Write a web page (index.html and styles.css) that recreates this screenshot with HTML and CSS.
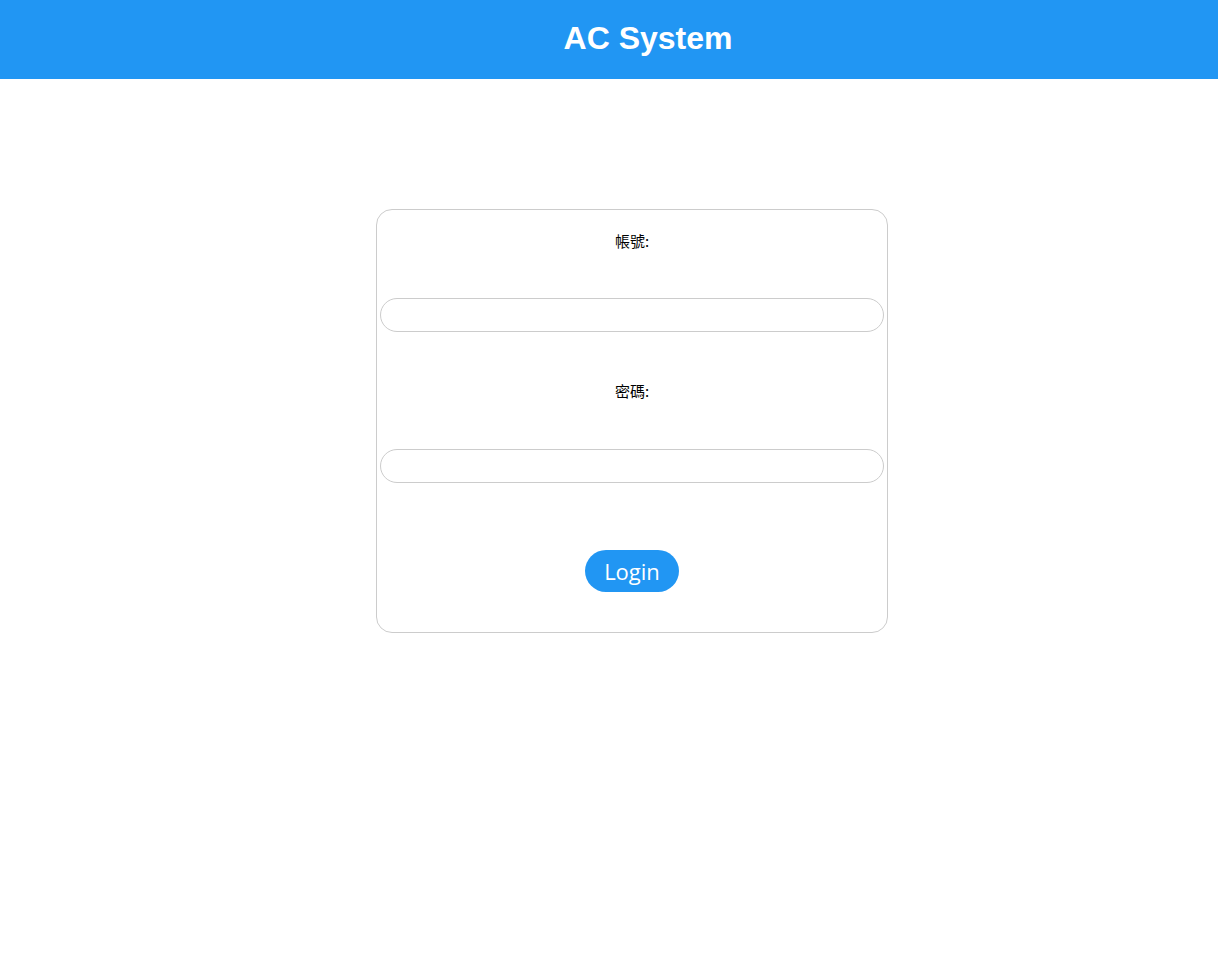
FILE: index.html
```html
<!DOCTYPE html>
<html lang="zh-Hant">
<head>
<meta charset="utf-8">
<title>AC System</title>
<link rel="stylesheet" href="styles.css">
</head>
<body>
<header class="topbar">
  <h1 class="title">AC System</h1>
</header>
<main class="main">
  <form class="card">
    <label class="label" for="acc">帳號:</label>
    <input class="field" id="acc" type="text">
    <label class="label label-second" for="pwd">密碼:</label>
    <input class="field field-second" id="pwd" type="password">
    <button class="login" type="button">Login</button>
  </form>
</main>
</body>
</html>
```
FILE: styles.css
```css
html, body {
  margin: 0;
  padding: 0;
  background: #ffffff;
}
body {
  font-family: "Liberation Sans", Arial, "Noto Sans CJK TC", sans-serif;
}
.topbar {
  height: 79px;
  background: #2196f3;
  display: flex;
  align-items: center;
  justify-content: center;
  padding-left: 78px;
  box-sizing: border-box;
}
.title {
  margin: 0;
  color: #ffffff;
  font-family: "Liberation Sans", Arial, sans-serif;
  font-weight: bold;
  font-size: 32px;
  line-height: 36px;
  position: relative;
  top: -2px;
}
.main {
  display: flex;
  justify-content: center;
  padding-top: 130px;
  padding-left: 46px;
}
.card {
  width: 512px;
  box-sizing: border-box;
  border: 1px solid #cccccc;
  border-radius: 16px;
  padding: 21px 3px 40px;
  display: flex;
  flex-direction: column;
  align-items: center;
  margin: 0;
}
.label {
  font-family: "Noto Sans CJK TC", sans-serif;
  font-size: 15px;
  line-height: 20px;
  color: #000000;
}
.label-second {
  margin-top: 49px;
}
.field {
  margin: 47px 0 0;
  width: 100%;
  height: 34px;
  box-sizing: border-box;
  border: 1px solid #cccccc;
  border-radius: 17px;
  padding: 0 12px;
  font-size: 16px;
  outline: none;
  background: #ffffff;
}
.field-second {
  margin-top: 48px;
}
.login {
  margin-top: 67px;
  width: 94px;
  height: 42px;
  padding: 0;
  border: none;
  border-radius: 21px;
  background: #2196f3;
  color: #ffffff;
  font-family: "Open Sans", "Noto Sans", sans-serif;
  font-size: 22px;
  line-height: 42px;
  cursor: pointer;
}
```
